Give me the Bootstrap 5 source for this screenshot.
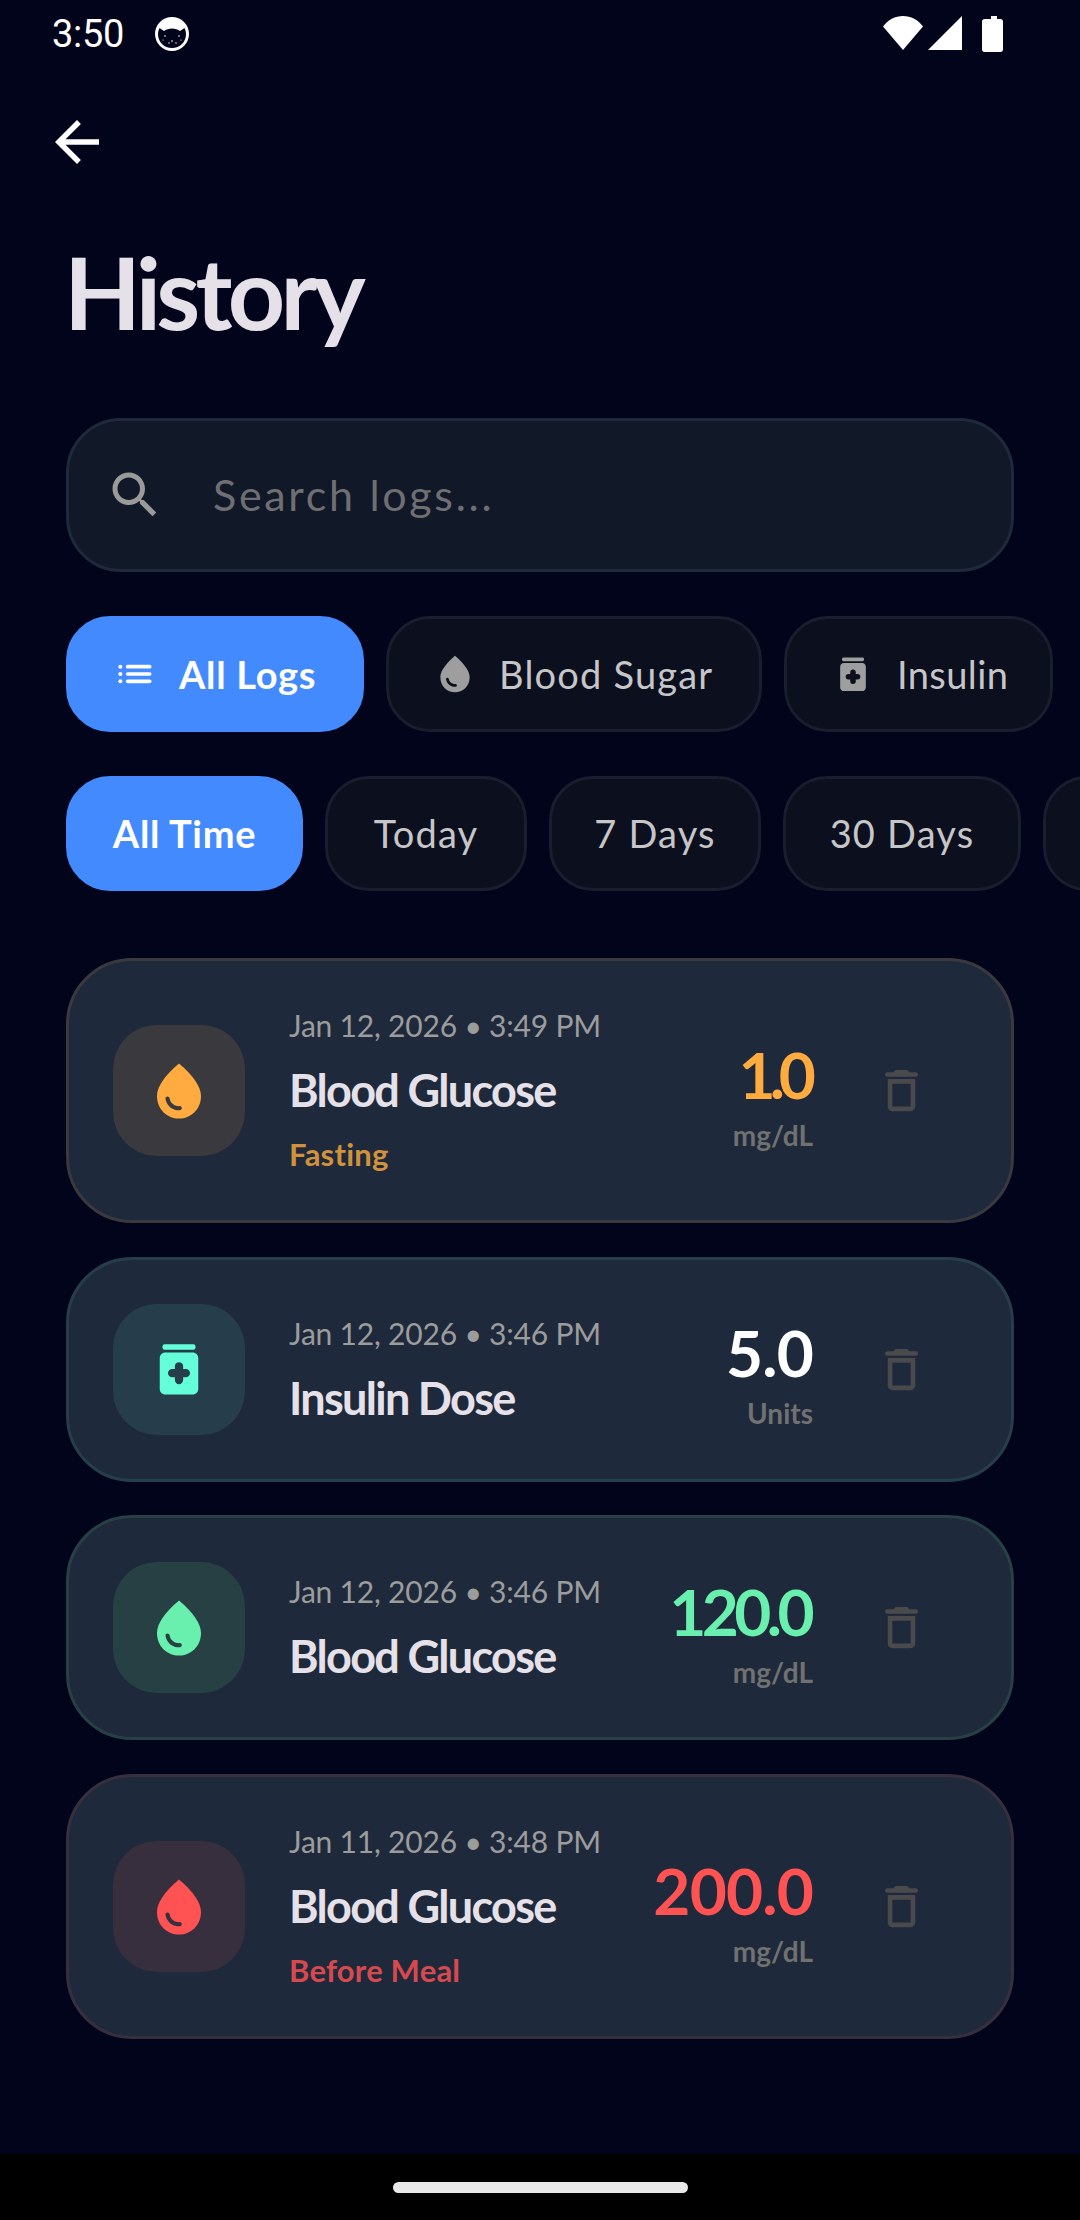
<!DOCTYPE html>
<html lang="en"><head><meta charset="utf-8"><title>History</title>
<link href="https://cdn.jsdelivr.net/npm/bootstrap@5.3.0/dist/css/bootstrap.min.css" rel="stylesheet">
<style>
html,body{margin:0;background:#01041a}
body{font-family:"Lato","Liberation Sans",sans-serif;width:1080px;height:2220px;overflow:hidden}
.screen{width:1080px;height:2220px;background:#01041a;overflow:hidden}
.sbar{height:66px;padding:2px 77px 0 52px;color:#fff;gap:0}
.sbar-time{font-family:Roboto,sans-serif;font-size:38px;line-height:64px;letter-spacing:-.3px}
.sbar-cat{margin-left:30px}
.backrow{height:152px;padding-left:44px}
.pg-title{font-size:100px;font-weight:700;line-height:120px;letter-spacing:-4.700px;color:#e6e1e9;margin:0 0 0 64px;height:200px;padding-top:13px}
.sbox{margin:0 66px;height:154px;background:#111827;border:3px solid #1e293b;border-radius:55px;padding-left:36px;gap:48px}
.sbox-ph{font-size:43px;letter-spacing:2.700px;color:#6f6f73}
.chiprow{margin-left:66px;gap:22px;overflow:hidden}
.crow1{margin-top:44px;height:116px}
.crow2{margin-top:44px;height:115px}
.pill{flex:none;height:100%;background:#0b0f1e;border:3px solid #181e2e;border-radius:44px;font-size:38px;color:#c6c6c8;gap:22px;letter-spacing:1.200px}
.pill-ic{padding-left:44px}
.pill.on{background:#448aff;border-color:#448aff;color:#fff;font-weight:700;letter-spacing:.7px}
.w-al{width:298px}.w-bs{width:376px}.w-in{width:269px;letter-spacing:.4px}
.w-at{width:237px}.w-to{width:202px}.w-7d{width:212px}.w-30{width:238px}.w-ex{width:200px}
.gly{flex:none;display:block}
.loglist{margin:67px 66px 0;gap:33.700px}
.logcard{border-radius:66px;border:3px solid var(--tint);background:#1e293b;padding:44px;gap:44px}
.c-or{--acc:#ffab40;--tint:#39393e;--tag:#d0923c}
.c-te{--acc:#64ffda;--tint:#263e4b}
.c-gr{--acc:#69f0ae;--tint:#264044}
.c-re{--acc:#ff5252;--tint:#372f3e;--tag:#d6494e}
.tile{flex:none;width:132px;height:131px;border-radius:44px;background:var(--tint);color:var(--acc)}
.l-date{font-size:30px;line-height:40px;color:#9c9c9c;letter-spacing:-.2px}
.l-name{font-size:45px;line-height:56px;font-weight:700;color:#e6e1e9;margin-top:17px;letter-spacing:-1.700px}
.l-tag{font-size:31px;line-height:40px;font-weight:700;letter-spacing:.2px;color:var(--tag);margin-top:16px;padding-bottom:2px;height:42px}
.vals{flex:none;text-align:right;margin-right:-22px;padding-top:8px}
.v-num{font-size:64px;line-height:80px;font-weight:700;letter-spacing:-.8px;color:#fff}
.c-or .v-num,.c-gr .v-num,.c-re .v-num{color:var(--acc)}
.v-one{letter-spacing:-6px;padding-right:3px}
.v-hundred{letter-spacing:-4.600px;padding-right:3px}
.v-unit{font-size:28px;line-height:40px;font-weight:700;color:#717171}
.bin{flex:none;width:132px;color:#4a4a4c}
.navb{background:#000;height:66px;margin-top:auto}
.navh{width:295px;height:11px;border-radius:6px;background:#e9e9e9}
</style></head>
<body>
<div class="screen d-flex flex-column">
  <div class="sbar d-flex align-items-center justify-content-between">
    <div class="d-flex align-items-center">
      <span class="sbar-time">3:50</span>
      <svg class="gly sbar-cat" width="36" height="36" viewBox="0 0 36 36" aria-hidden="true"><circle cx="18" cy="18" r="17" fill="#fff"/><path d="M4 18c0-2 .5-4 1.500-6l4.500 3c2-1.500 5-2.500 8-2.500s6 1 8 2.500l4.500-3c1 2 1.500 4 1.500 6 0 8-6 14-14 14S4 26 4 18z" fill="#01041a"/><g fill="#fff"><circle cx="11" cy="20" r=".8"/><circle cx="18" cy="25" r=".8"/><circle cx="25" cy="20" r=".8"/><circle cx="15" cy="27" r=".7"/><circle cx="22" cy="27" r=".7"/><circle cx="9" cy="24" r=".6"/><circle cx="27" cy="24" r=".6"/></g></svg>
    </div>
    <div class="d-flex align-items-center">
      <svg class="gly" width="120" height="38" viewBox="0 0 120 38" aria-hidden="true" fill="#fff"><path d="M0 11.500C5 5 12 1 20 1s15 4 20 10.500L20 35z"/><path d="M45 35L79 1v34z"/><path d="M106 1h6v3h3.500c1.400 0 2.500 1.100 2.500 2.500v28c0 1.400-1.100 2.500-2.500 2.500h-16c-1.400 0-2.500-1.100-2.500-2.500v-28C97 5.100 98.100 4 99.500 4h6.500z" transform="translate(2 0)"/></svg>
    </div>
  </div>
  <div class="backrow d-flex align-items-center">
    <svg class="gly" width="66" height="66" viewBox="0 0 24 24" fill="#fff" aria-hidden="true"><path d="M20 11H7.830l5.590-5.590L12 4l-8 8 8 8 1.410-1.410L7.830 13H20z"/></svg>
  </div>
  <h1 class="pg-title">History</h1>
  <div class="sbox d-flex align-items-center">
    <svg class="gly" width="60" height="60" viewBox="0 0 24 24" fill="#9a9a9a" aria-hidden="true"><path d="M15.500 14h-.79l-.28-.27C15.410 12.590 16 11.110 16 9.500 16 5.910 13.090 3 9.500 3S3 5.910 3 9.500 5.910 16 9.500 16c1.610 0 3.090-.59 4.230-1.570l.27.28v.79l5 4.990L20.490 19l-4.990-5zm-6 0C7.010 14 5 11.990 5 9.500S7.010 5 9.500 5 14 7.010 14 9.500 11.990 14 9.500 14z"/></svg>
    <span class="sbox-ph">Search logs...</span>
  </div>
  <div class="chiprow crow1 d-flex">
    <div class="pill pill-ic on w-al d-flex align-items-center">
      <svg class="gly" width="44" height="44" viewBox="0 0 24 24" fill="#fff" aria-hidden="true"><circle cx="4" cy="8" r="1.100"/><circle cx="4" cy="12" r="1.100"/><circle cx="4" cy="16" r="1.100"/><rect x="7" y="7" width="14" height="2" rx="1"/><rect x="7" y="11" width="14" height="2" rx="1"/><rect x="7" y="15" width="14" height="2" rx="1"/></svg>
      <span>All Logs</span>
    </div>
    <div class="pill pill-ic w-bs d-flex align-items-center">
      <svg class="gly" width="44" height="44" viewBox="0 0 24 24" fill="#9e9e9e" fill-rule="evenodd" aria-hidden="true"><path d="M12 2c-5.330 4.550-8 8.480-8 11.800 0 4.980 3.800 8.200 8 8.200s8-3.220 8-8.200C20 10.480 17.330 6.550 12 2zM7.830 14c.37 0 .67.26.74.62.41 2.220 2.280 2.980 3.640 2.870.43-.02.79.32.79.75 0 .4-.32.73-.72.75-2.130.13-4.620-1.090-5.190-4.120C7.010 14.420 7.370 14 7.830 14z"/></svg>
      <span>Blood Sugar</span>
    </div>
    <div class="pill pill-ic w-in d-flex align-items-center">
      <svg class="gly" width="44" height="44" viewBox="0 0 24 24" fill="#9e9e9e" fill-rule="evenodd" aria-hidden="true"><rect x="6" y="3" width="12" height="2" rx=".8"/><path d="M7 6h10c1.100 0 2 .9 2 2v11.300c0 1.100-.9 2-2 2H7c-1.100 0-2-.9-2-2V8c0-1.100.9-2 2-2zM10.500 12v-1a1.500 1.500 0 0 1 3 0v1h1a1.500 1.500 0 0 1 0 3h-1v1a1.500 1.500 0 0 1-3 0v-1h-1a1.500 1.500 0 0 1 0-3z"/></svg>
      <span>Insulin</span>
    </div>
  </div>
  <div class="chiprow crow2 d-flex">
    <div class="pill on w-at d-flex align-items-center justify-content-center">All Time</div>
    <div class="pill w-to d-flex align-items-center justify-content-center">Today</div>
    <div class="pill w-7d d-flex align-items-center justify-content-center">7 Days</div>
    <div class="pill w-30 d-flex align-items-center justify-content-center">30 Days</div>
    <div class="pill w-ex d-flex align-items-center justify-content-center"></div>
  </div>
  <div class="loglist d-flex flex-column">
    <div class="logcard c-or d-flex align-items-center">
      <div class="tile d-flex align-items-center justify-content-center">
        <svg class="gly" width="66" height="66" viewBox="0 0 24 24" fill="currentColor" fill-rule="evenodd" aria-hidden="true"><path d="M12 2c-5.330 4.550-8 8.480-8 11.800 0 4.980 3.800 8.200 8 8.200s8-3.220 8-8.200C20 10.480 17.330 6.550 12 2zM7.830 14c.37 0 .67.26.74.62.41 2.220 2.280 2.980 3.640 2.870.43-.02.79.32.79.75 0 .4-.32.73-.72.75-2.130.13-4.620-1.090-5.190-4.120C7.010 14.420 7.370 14 7.830 14z"/></svg>
      </div>
      <div class="flex-grow-1"><div class="l-date">Jan 12, 2026 • 3:49 PM</div><div class="l-name">Blood Glucose</div><div class="l-tag">Fasting</div></div>
      <div class="vals"><div class="v-num v-one">1.0</div><div class="v-unit">mg/dL</div></div>
      <div class="bin d-flex justify-content-center"><svg class="gly" width="55" height="55" viewBox="0 0 24 24" fill="currentColor" aria-hidden="true"><path d="M16 9v10H8V9h8m-1.500-6h-5l-1 1H5.800a1 1 0 0 0 0 2h12.400a1 1 0 0 0 0-2H15.500l-1-1zM18 7H6v12c0 1.100.9 2 2 2h8c1.100 0 2-.9 2-2V7z"/></svg></div>
    </div>
    <div class="logcard c-te d-flex align-items-center">
      <div class="tile d-flex align-items-center justify-content-center">
        <svg class="gly" width="66" height="66" viewBox="0 0 24 24" fill="currentColor" fill-rule="evenodd" aria-hidden="true"><rect x="6" y="3" width="12" height="2" rx=".8"/><path d="M7 6h10c1.100 0 2 .9 2 2v11.300c0 1.100-.9 2-2 2H7c-1.100 0-2-.9-2-2V8c0-1.100.9-2 2-2zM10.500 12v-1a1.500 1.500 0 0 1 3 0v1h1a1.500 1.500 0 0 1 0 3h-1v1a1.500 1.500 0 0 1-3 0v-1h-1a1.500 1.500 0 0 1 0-3z"/></svg>
      </div>
      <div class="flex-grow-1"><div class="l-date">Jan 12, 2026 • 3:46 PM</div><div class="l-name">Insulin Dose</div></div>
      <div class="vals"><div class="v-num">5.0</div><div class="v-unit">Units</div></div>
      <div class="bin d-flex justify-content-center"><svg class="gly" width="55" height="55" viewBox="0 0 24 24" fill="currentColor" aria-hidden="true"><path d="M16 9v10H8V9h8m-1.500-6h-5l-1 1H5.800a1 1 0 0 0 0 2h12.400a1 1 0 0 0 0-2H15.500l-1-1zM18 7H6v12c0 1.100.9 2 2 2h8c1.100 0 2-.9 2-2V7z"/></svg></div>
    </div>
    <div class="logcard c-gr d-flex align-items-center">
      <div class="tile d-flex align-items-center justify-content-center">
        <svg class="gly" width="66" height="66" viewBox="0 0 24 24" fill="currentColor" fill-rule="evenodd" aria-hidden="true"><path d="M12 2c-5.330 4.550-8 8.480-8 11.800 0 4.980 3.800 8.200 8 8.200s8-3.220 8-8.200C20 10.480 17.330 6.550 12 2zM7.830 14c.37 0 .67.26.74.62.41 2.220 2.280 2.980 3.640 2.870.43-.02.79.32.79.75 0 .4-.32.73-.72.75-2.130.13-4.620-1.090-5.190-4.120C7.010 14.420 7.370 14 7.830 14z"/></svg>
      </div>
      <div class="flex-grow-1"><div class="l-date">Jan 12, 2026 • 3:46 PM</div><div class="l-name">Blood Glucose</div></div>
      <div class="vals"><div class="v-num v-hundred">120.0</div><div class="v-unit">mg/dL</div></div>
      <div class="bin d-flex justify-content-center"><svg class="gly" width="55" height="55" viewBox="0 0 24 24" fill="currentColor" aria-hidden="true"><path d="M16 9v10H8V9h8m-1.500-6h-5l-1 1H5.800a1 1 0 0 0 0 2h12.400a1 1 0 0 0 0-2H15.500l-1-1zM18 7H6v12c0 1.100.9 2 2 2h8c1.100 0 2-.9 2-2V7z"/></svg></div>
    </div>
    <div class="logcard c-re d-flex align-items-center">
      <div class="tile d-flex align-items-center justify-content-center">
        <svg class="gly" width="66" height="66" viewBox="0 0 24 24" fill="currentColor" fill-rule="evenodd" aria-hidden="true"><path d="M12 2c-5.330 4.550-8 8.480-8 11.800 0 4.980 3.800 8.200 8 8.200s8-3.220 8-8.200C20 10.480 17.330 6.550 12 2zM7.830 14c.37 0 .67.26.74.62.41 2.220 2.280 2.980 3.640 2.870.43-.02.79.32.79.75 0 .4-.32.73-.72.75-2.130.13-4.620-1.090-5.190-4.120C7.010 14.420 7.370 14 7.830 14z"/></svg>
      </div>
      <div class="flex-grow-1"><div class="l-date">Jan 11, 2026 • 3:48 PM</div><div class="l-name">Blood Glucose</div><div class="l-tag">Before Meal</div></div>
      <div class="vals"><div class="v-num">200.0</div><div class="v-unit">mg/dL</div></div>
      <div class="bin d-flex justify-content-center"><svg class="gly" width="55" height="55" viewBox="0 0 24 24" fill="currentColor" aria-hidden="true"><path d="M16 9v10H8V9h8m-1.500-6h-5l-1 1H5.800a1 1 0 0 0 0 2h12.400a1 1 0 0 0 0-2H15.500l-1-1zM18 7H6v12c0 1.100.9 2 2 2h8c1.100 0 2-.9 2-2V7z"/></svg></div>
    </div>
  </div>
  <div class="navb d-flex align-items-center justify-content-center"><div class="navh"></div></div>
</div>
<script src="https://cdn.jsdelivr.net/npm/bootstrap@5.3.0/dist/js/bootstrap.bundle.min.js"></script>
</body></html>
